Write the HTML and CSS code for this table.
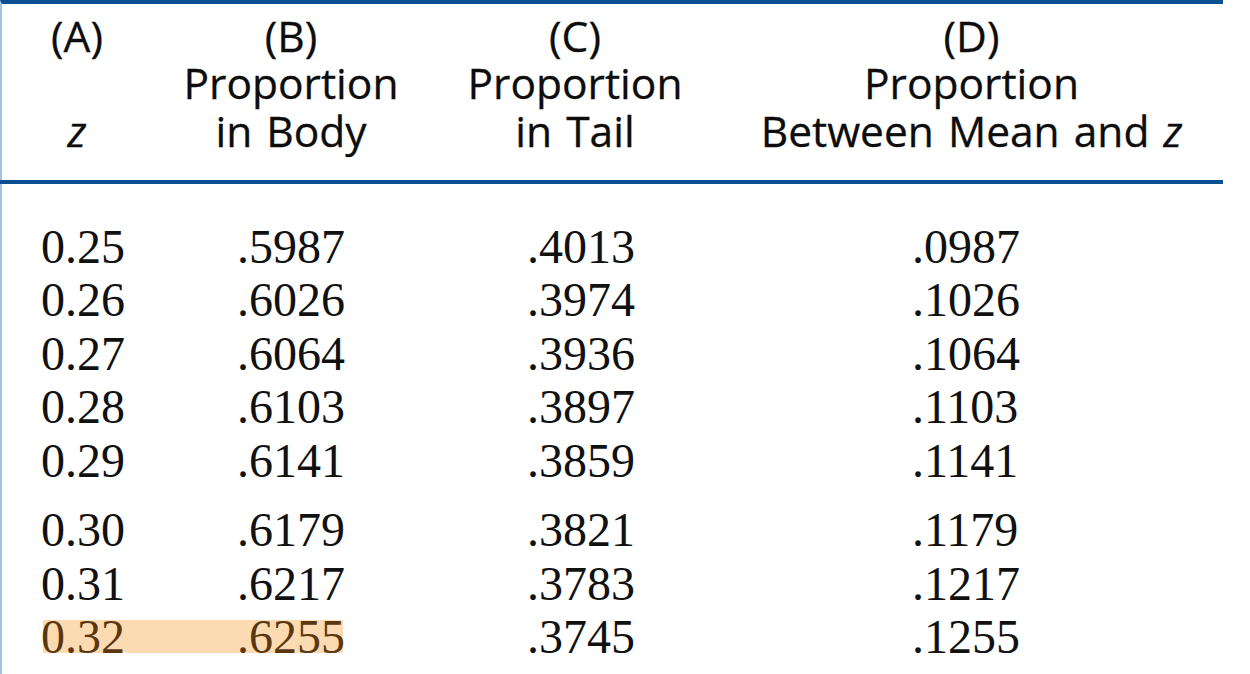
FILE: index.html
```html
<!DOCTYPE html>
<html lang="en">
<head>
<meta charset="utf-8">
<title>Unit normal table excerpt</title>
<link rel="stylesheet" href="styles.css">
</head>
<body>
<div class="table">
  <div class="head">
    <div class="hcell">
      <div class="l1">(A)</div>
      <div class="l3"><i>z</i></div>
    </div>
    <div class="hcell">
      <div class="l1">(B)</div>
      <div class="l2">Proportion</div>
      <div class="l3">in Body</div>
    </div>
    <div class="hcell">
      <div class="l1">(C)</div>
      <div class="l2">Proportion</div>
      <div class="l3">in Tail</div>
    </div>
    <div class="hcell">
      <div class="l1">(D)</div>
      <div class="l2">Proportion</div>
      <div class="l3">Between Mean and <i>z</i></div>
    </div>
  </div>
  <div class="body">
    <div class="group">
      <div class="row"><span class="c a">0.25</span><span class="c b">.5987</span><span class="c cc">.4013</span><span class="c d">.0987</span></div>
      <div class="row"><span class="c a">0.26</span><span class="c b">.6026</span><span class="c cc">.3974</span><span class="c d">.1026</span></div>
      <div class="row"><span class="c a">0.27</span><span class="c b">.6064</span><span class="c cc">.3936</span><span class="c d">.1064</span></div>
      <div class="row"><span class="c a">0.28</span><span class="c b">.6103</span><span class="c cc">.3897</span><span class="c d">.1103</span></div>
      <div class="row"><span class="c a">0.29</span><span class="c b">.6141</span><span class="c cc">.3859</span><span class="c d">.1141</span></div>
    </div>
    <div class="group">
      <div class="row"><span class="c a">0.30</span><span class="c b">.6179</span><span class="c cc">.3821</span><span class="c d">.1179</span></div>
      <div class="row"><span class="c a">0.31</span><span class="c b">.6217</span><span class="c cc">.3783</span><span class="c d">.1217</span></div>
      <div class="row hl"><span class="mark"></span><span class="c a">0.32</span><span class="c b">.6255</span><span class="c cc">.3745</span><span class="c d">.1255</span></div>
      <div class="row"><span class="c a">0.33</span><span class="c b">.6293</span><span class="c cc">.3707</span><span class="c d">.1293</span></div>
    </div>
  </div>
</div>
</body>
</html>
```
FILE: styles.css
```css
html, body {
  margin: 0;
  padding: 0;
  background: #ffffff;
  height: 674px;
  overflow: hidden;
}

.table {
  width: 1221px;
  border-top: 4px solid #0b4e92;
  border-left: 2px solid #a3c2e1;
  min-height: 700px;
  color: #111111;
}

.head {
  display: grid;
  grid-template-columns: 150px 278px 290px 503px;
  margin-left: -2px;
  padding-left: 2px;
  padding-top: 9px;
  padding-bottom: 25px;
  border-bottom: 4px solid #0b4e92;
  font-family: "Open Sans", "Noto Sans", sans-serif;
  font-size: 42.5px;
  word-spacing: 3px;
  color: #0d0d0d;
  -webkit-text-stroke: 0.3px #0d0d0d;
}

.hcell {
  display: grid;
  grid-template-rows: 46px 48px 48px;
  text-align: center;
  white-space: nowrap;
}

.hcell .l1 { grid-row: 1; line-height: 46px; }
.hcell .l2 { grid-row: 2; line-height: 48px; }
.hcell .l3 { grid-row: 3; line-height: 48px; }

.hcell i { font-style: italic; }

.body {
  padding-top: 35.5px;
  font-family: "Liberation Serif", "Times New Roman", serif;
  font-size: 48px;
  line-height: 53.5px;
}

.group + .group {
  margin-top: 16px;
}

.row {
  display: grid;
  grid-template-columns: 150px 278px 290px 503px;
  height: 53.5px;
}

.c {
  grid-row: 1;
  white-space: nowrap;
}

.c.a { grid-column: 1; padding-left: 39px; }
.c.b { grid-column: 2; padding-left: 85px; }
.c.cc { grid-column: 3; padding-left: 97px; }
.c.d { grid-column: 4; padding-left: 192px; }

.mark {
  grid-row: 1;
  grid-column: 1 / 3;
  margin-left: 41px;
  margin-right: 87px;
  margin-top: 10px;
  height: 33px;
  background: #fddbb2;
}

.row.hl .a,
.row.hl .b {
  color: #5a3711;
}
```
